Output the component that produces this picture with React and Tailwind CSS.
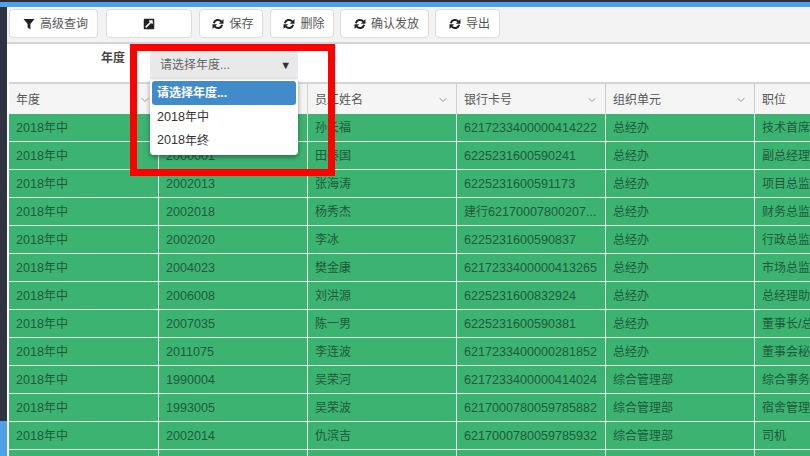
import React from "react";
import { ChevronDown } from "lucide-react";
import { FaExternalLinkSquareAlt } from "react-icons/fa";

const columns = ["年度", "", "员工姓名", "银行卡号", "组织单元", "职位"];

const rows = [
  ["2000001", "孙长福", "6217233400000414222", "总经办", "技术首席官"],
  ["2000001", "田秦国", "6225231600590241", "总经办", "副总经理"],
  ["2002013", "张海涛", "6225231600591173", "总经办", "项目总监"],
  ["2002018", "杨秀杰", "建行62170007800207...", "总经办", "财务总监"],
  ["2002020", "李冰", "6225231600590837", "总经办", "行政总监"],
  ["2004023", "樊金康", "6217233400000413265", "总经办", "市场总监"],
  ["2006008", "刘洪源", "6225231600832924", "总经办", "总经理助理"],
  ["2007035", "陈一男", "6225231600590381", "总经办", "董事长/总经理"],
  ["2011075", "李连波", "6217233400000281852", "总经办", "董事会秘书"],
  ["1990004", "吴荣河", "6217233400000414024", "综合管理部", "综合事务主管"],
  ["1993005", "吴荣波", "6217000780059785882", "综合管理部", "宿舍管理员"],
  ["2002014", "仇滨吉", "6217000780059785932", "综合管理部", "司机"],
  ["", "", "", "", ""],
];

// chinese runs sit a bit smaller than the digits in the reference
const Mixed = ({ text }) =>
  text.split(/([\u4e00-\u9fff]+)/).map((part, i) =>
    i % 2 ? (
      <span key={i} className="text-[12px]">
        {part}
      </span>
    ) : (
      part
    ),
  );

const FilterIcon = () => (
  <svg viewBox="0 0 12 12" className="w-[12px] h-[12px] text-[#222]">
    <path d="M0.5 1h11L7.4 6v5.5L4.6 9.5V6z" fill="currentColor" />
  </svg>
);

const RefreshIcon = () => (
  <svg viewBox="0 0 12 12" className="w-[12px] h-[12px] text-[#222]" fill="none" stroke="currentColor" strokeWidth="2">
    <path d="M1.8 5.2A4.3 4.3 0 0 1 9.3 3.6" />
    <path d="M11.5 1v4.8H6.8z" fill="currentColor" stroke="none" />
    <path d="M10.2 6.8A4.3 4.3 0 0 1 2.7 8.4" />
    <path d="M0.5 11V6.2h4.7z" fill="currentColor" stroke="none" />
  </svg>
);

const ToolButton = ({ icon, label, width }) => (
  <button className={`${width} h-[29px] flex items-center justify-center gap-[5px] ${label ? "pl-[4px]" : ""} bg-white border border-[#dcdcdc] rounded-[4px] text-[12px] text-[#555]`}>
    {icon}
    {label && <span>{label}</span>}
  </button>
);

export default function App() {
  return (
    <div className="relative w-[810px] h-[456px] overflow-hidden flex flex-col bg-white text-[12.6px] font-['Liberation_Sans','Noto_Sans_CJK_SC',sans-serif]">
      <div className="h-[2px] bg-[#2b2f3a]" />
      <div className="h-[5px] bg-[#4f9fe9]" />

      <div className="flex flex-1 min-h-0">
        {/* left strip of the page behind the frame */}
        <div className="w-[7px] flex flex-col">
          <div className="h-[414px] bg-[#2f3342]" />
          <div className="flex-1 bg-[#4f9fe9]" />
        </div>

        <div className="flex-1 min-w-0 flex flex-col">
          <div className="h-[37px] flex gap-[7px] pl-[2px] pt-[2px] bg-[#f3f3f3] border-b-2 border-[#d4d4d4]">
            <ToolButton width="w-[89px]" icon={<FilterIcon />} label="高级查询" />
            <ToolButton width="w-[86px] ml-[1px]" icon={<FaExternalLinkSquareAlt className="w-[12px] h-[12px] text-[#222]" />} />
            <ToolButton width="w-[64px]" icon={<RefreshIcon />} label="保存" />
            <ToolButton width="w-[64px]" icon={<RefreshIcon />} label="删除" />
            <ToolButton width="w-[89px] -ml-[1px]" icon={<RefreshIcon />} label="确认发放" />
            <ToolButton width="w-[65px] -ml-[1px]" icon={<RefreshIcon />} label="导出" />
          </div>

          <div className="h-[38px] flex items-start bg-white">
            <span className="ml-[94px] mt-[5px] text-[12px] font-bold text-[#444]">年度</span>
            <div className="relative ml-[25px] mt-[7px] w-[148px] h-[28px] flex items-center justify-between pl-[10px] pr-[7px] bg-[#e9e9e9] rounded-t-[4px] text-[12px] text-[#666] z-10">
              <span>请选择年度...</span>
              <span className="text-[11px] text-[#333]">▼</span>
              <div className="absolute left-0 top-[29px] w-[148px] h-[75px] bg-white rounded-b-[4px] shadow-[0_2px_5px_rgba(0,0,0,0.4)] px-[2px] pt-[1px] text-[#333]">
                <div className="h-[24px] flex items-center px-[5px] bg-[#428bca] rounded-[3px] text-white font-bold">请选择年度...</div>
                <div className="h-[24px] flex items-center px-[5px] text-[12.6px]">
                  <Mixed text="2018年中" />
                </div>
                <div className="h-[23px] flex items-center px-[5px] text-[12.6px]">
                  <Mixed text="2018年终" />
                </div>
              </div>
            </div>
          </div>

          <div className="ml-[2px] flex-1 min-h-0 overflow-hidden">
            <div className="grid grid-cols-[150px_149px_149px_149px_149px_1fr] h-[32px] bg-[#f5f5f5] border-t-2 border-[#d4d4d4] text-[12px] text-[#555]">
              {columns.map((col, i) => (
                <div key={i} className="flex items-center justify-between pt-[2px] px-[7px] border-r border-[#cfcfcf] last:border-r-0">
                  <span>{col}</span>
                  {i < 5 && <ChevronDown strokeWidth={1.5} className="w-[12px] h-[12px] text-[#777]" />}
                </div>
              ))}
            </div>

            {rows.map((row, r) => (
              <div key={r} className="grid grid-cols-[150px_149px_149px_149px_149px_1fr] h-[28px] bg-[#3cb371] border-b border-[#dff3e6] text-[#1f5a3b]">
                {["2018年中", ...row].map((cell, c) => (
                  <div key={c} className="flex items-center pt-[1px] px-[7px] border-r border-[#dff3e6] last:border-r-0 last:pr-0 whitespace-nowrap overflow-hidden">
                    <span>{r === 12 ? "" : <Mixed text={cell} />}</span>
                  </div>
                ))}
              </div>
            ))}
          </div>
        </div>
      </div>

      {/* red annotation drawn over the screenshot */}
      <div className="absolute left-[130px] top-[44px] w-[205px] h-[132px] border-[7px] border-[#ff0000] z-20 pointer-events-none" />
    </div>
  );
}
